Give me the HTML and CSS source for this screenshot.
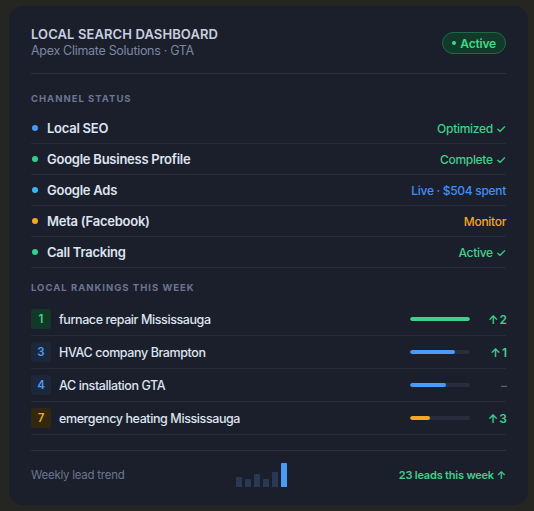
FILE: index.html
```
<!DOCTYPE html>
<html lang="en">
<head>
    <meta charset="UTF-8">
    <meta name="viewport" content="width=device-width, initial-scale=1.0">
    <title>Local Search Dashboard</title>
    <link rel="stylesheet" href="styles.css">
</head>
<body>
    <div class="card">
        <div class="header">
            <div>
                <div class="title">LOCAL SEARCH DASHBOARD</div>
                <div class="subtitle">Apex Climate Solutions · GTA</div>
            </div>
            <span class="badge"><span class="badge-dot"></span>Active</span>
        </div>

        <div class="section-label">CHANNEL STATUS</div>
        <div class="channel">
            <span class="dot blue"></span>
            <span class="name">Local SEO</span>
            <span class="status green">Optimized ✓</span>
        </div>
        <div class="channel">
            <span class="dot green"></span>
            <span class="name">Google Business Profile</span>
            <span class="status green">Complete ✓</span>
        </div>
        <div class="channel">
            <span class="dot sky"></span>
            <span class="name">Google Ads</span>
            <span class="status blue">Live · $504 spent</span>
        </div>
        <div class="channel">
            <span class="dot orange"></span>
            <span class="name">Meta (Facebook)</span>
            <span class="status orange">Monitor</span>
        </div>
        <div class="channel">
            <span class="dot green"></span>
            <span class="name">Call Tracking</span>
            <span class="status green">Active ✓</span>
        </div>

        <div class="section-label second">LOCAL RANKINGS THIS WEEK</div>
        <div class="rank-row">
            <span class="rank green">1</span>
            <span class="keyword">furnace repair Mississauga</span>
            <span class="track"><span class="fill green" style="width: 100%"></span></span>
            <span class="change up">↑ 2</span>
        </div>
        <div class="rank-row">
            <span class="rank blue">3</span>
            <span class="keyword">HVAC company Brampton</span>
            <span class="track"><span class="fill blue" style="width: 75%"></span></span>
            <span class="change up">↑ 1</span>
        </div>
        <div class="rank-row">
            <span class="rank blue">4</span>
            <span class="keyword">AC installation GTA</span>
            <span class="track"><span class="fill blue" style="width: 60%"></span></span>
            <span class="change flat">–</span>
        </div>
        <div class="rank-row">
            <span class="rank orange">7</span>
            <span class="keyword">emergency heating Mississauga</span>
            <span class="track"><span class="fill orange" style="width: 33%"></span></span>
            <span class="change up">↑ 3</span>
        </div>

        <div class="footer">
            <span class="trend-label">Weekly lead trend</span>
            <div class="spark">
                <span style="height: 10px"></span>
                <span style="height: 8px"></span>
                <span style="height: 13px"></span>
                <span style="height: 8px"></span>
                <span style="height: 15px"></span>
                <span class="now" style="height: 24px"></span>
            </div>
            <span class="leads">23 leads this week ↑</span>
        </div>
    </div>
</body>
</html>
```

FILE: styles.css
```
body {
    margin: 0;
    padding: 6px 6px 6px 9px;
    background: #252521;
    font-family: Inter, "Noto Sans", sans-serif;
    color: #dfe4f2;
}
.card {
    background: #1b1f2b;
    border-radius: 14px;
    padding: 20px 22px 18px;
}
.header {
    display: flex;
    justify-content: space-between;
    align-items: center;
    padding-bottom: 14px;
    border-bottom: 1px solid #2b3142;
}
.title { font-size: 13px; line-height: 16px; font-weight: 600; letter-spacing: 0.1px; color: #c9cfe0; }
.subtitle { font-size: 12.5px; line-height: 16px; margin-top: 1px; letter-spacing: -0.3px; color: #7c86a4; }
.badge {
    display: flex;
    align-items: center;
    gap: 4px;
    height: 20px;
    padding: 0 9px;
    margin-top: 1px;
    border: 1px solid #1d6a47;
    background: #113a2b;
    border-radius: 11px;
    color: #3ddc84;
    font-size: 12px;
    font-weight: 600;
    letter-spacing: -0.2px;
}
.badge-dot { width: 4px; height: 4px; border-radius: 50%; background: #3ddc84; }

.section-label {
    font-size: 9.5px;
    line-height: 12px;
    font-weight: 700;
    letter-spacing: 1px;
    color: #6b7592;
    margin: 19px 0 8px;
}
.section-label.second { margin: 14px 0 9px; }

.channel {
    display: flex;
    align-items: center;
    height: 30px;
    border-bottom: 1px solid #262b3a;
}
.dot { width: 6px; height: 6px; border-radius: 50%; margin: 0 9px 0 1px; }
.dot.blue { background: #4a9bf5; }
.dot.green { background: #34d08a; }
.dot.sky { background: #38b6f5; }
.dot.orange { background: #f5a623; }
.name { flex: 1; font-size: 13px; font-weight: 600; letter-spacing: -0.25px; color: #dfe4f2; }
.status { font-size: 12px; font-weight: 500; letter-spacing: -0.3px; }
.status.green { color: #3fd08a; }
.status.blue { color: #3f8ff5; }
.status.orange { color: #f5a623; }

.rank-row {
    display: flex;
    align-items: center;
    height: 32px;
    border-bottom: 1px solid #262b3a;
}
.rank {
    width: 20px;
    height: 20px;
    border-radius: 3px;
    display: flex;
    align-items: center;
    justify-content: center;
    font-size: 11.5px;
    font-weight: 600;
    margin-right: 8px;
}
.rank.green { background: #12382a; color: #3ddc84; }
.rank.blue { background: #1c273b; color: #4a9bf5; }
.rank.orange { background: #33280f; color: #f5a623; }
.keyword { flex: 1; font-size: 12.5px; font-weight: 500; letter-spacing: -0.4px; color: #dfe4f2; }
.track { width: 60px; height: 4px; border-radius: 2px; background: #272d3c; overflow: hidden; }
.fill { display: block; height: 100%; border-radius: 2px; }
.fill.green { background: #3fd08a; }
.fill.blue { background: #4a9bf5; }
.fill.orange { background: #f5a623; }
.change { width: 36px; text-align: right; font-size: 12px; font-weight: 600; letter-spacing: -1px; }
.change.up { color: #3fd08a; }
.change.flat { color: #58607a; }

.footer {
    display: flex;
    justify-content: space-between;
    align-items: center;
    margin-top: 15px;
    padding-top: 12px;
    border-top: 1px solid #2b3142;
}
.trend-label { font-size: 11.5px; letter-spacing: -0.25px; color: #6b7592; }
.spark { display: flex; align-items: flex-end; gap: 3px; height: 24px; }
.spark span { width: 6px; background: #283855; border-radius: 1px 1px 0 0; }
.spark span.now { background: #4a9bf5; }
.leads { font-size: 11px; font-weight: 600; letter-spacing: -0.2px; color: #3fd08a; }
```
